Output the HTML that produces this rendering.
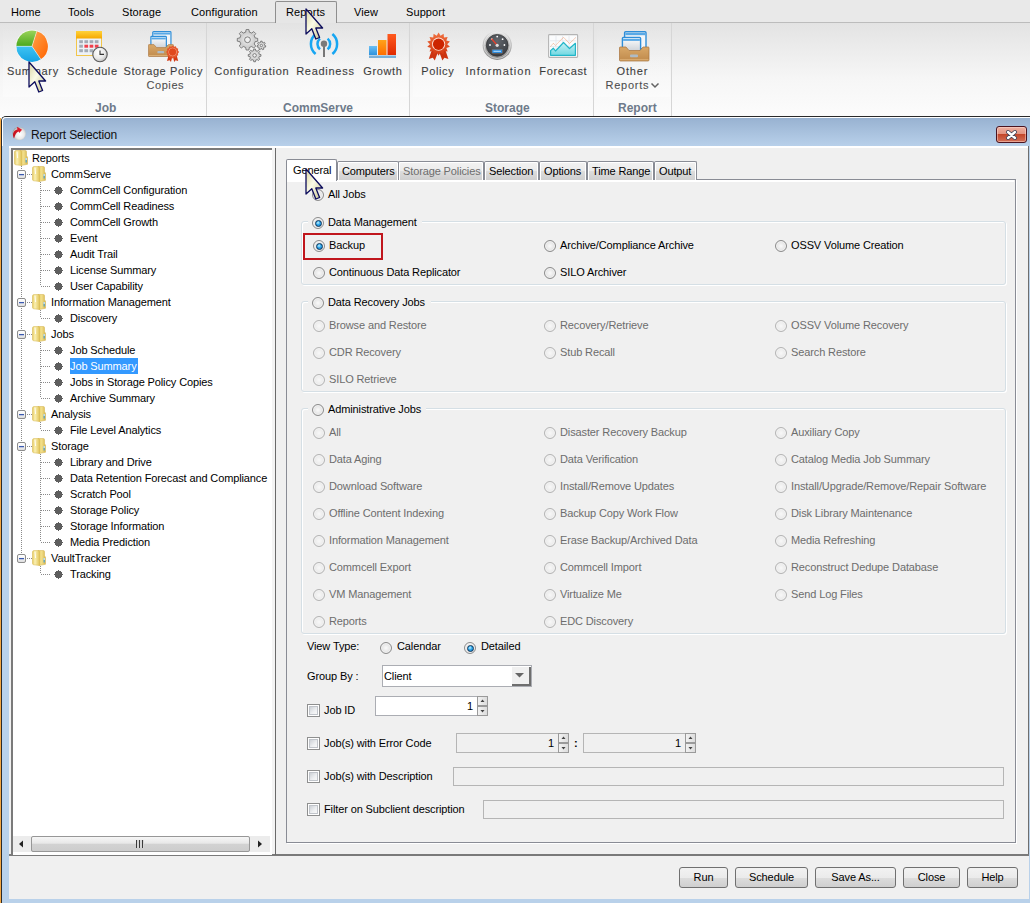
<!DOCTYPE html><html><head><meta charset="utf-8"><style>
*{margin:0;padding:0;box-sizing:border-box}
html,body{width:1030px;height:903px;overflow:hidden;background:#fff}
body{position:relative;font-family:"Liberation Sans",sans-serif;font-size:11px;color:#000}
.a{position:absolute}
.t{position:absolute;white-space:nowrap;line-height:13px;letter-spacing:-0.15px}
#menubar{left:0;top:0;width:1030px;height:23px;background:#e9e9e9;border-bottom:1px solid #bcbcbc}
.mi{position:absolute;top:6px;font-size:11px;line-height:13px;color:#000;letter-spacing:0.1px}
#reptab{left:275px;top:1px;width:62px;height:23px;border:1px solid #8e8e8e;border-bottom:none;border-radius:2px 2px 0 0;background:#e6e6e6}
#ribbon{left:0;top:23px;width:1030px;height:93px;background:linear-gradient(#e3e3e3,#f6f6f6 60%,#fcfcfc)}
.rsep{position:absolute;top:23px;width:1px;height:93px;background:#d6d6d6}
.rl{position:absolute;font-size:11px;line-height:14px;letter-spacing:0.55px;color:#000;-webkit-text-stroke:0.12px #000;text-align:center;white-space:nowrap}
.gl{position:absolute;top:101px;font-size:12px;line-height:14px;font-weight:bold;color:#6e7a8a;white-space:nowrap}
#dlgtitle{left:2px;top:117px;width:1028px;height:29px;background:linear-gradient(#98b2d1,#b8d0ea);border-left:1px solid #fff;border-top:1px solid #fff;border-radius:4px 0 0 0}
#dlg{left:1px;top:116px;width:1029px;height:787px;background:#b9d1ea;border-top:1px solid #2a2a2a;border-left:1px solid #2a2a2a;border-top-left-radius:5px}
#body{left:9px;top:146px;width:1020px;height:753px;background:#f0f0f0;border-top:2px solid #fff}
.tt{position:absolute;font-size:12px;line-height:14px;letter-spacing:-0.17px;color:#111;white-space:nowrap}
#tree{left:11px;top:148px;width:261px;height:707px;background:#fff;border-left:2px solid #7a7a7a;border-top:2px solid #7a7a7a}
.tn{position:absolute;white-space:nowrap;line-height:13px;letter-spacing:-0.12px;color:#000}
.bul{position:absolute;width:9px;height:9px;border-radius:50%;background:#595959}
.eb{position:absolute;width:9px;height:9px;border:1px solid #8c8c8c;border-radius:2px;background:linear-gradient(#fff,#f2f2f2 50%,#dedede)}
.eb:after{content:"";box-sizing:border-box;position:absolute;left:1px;top:3px;width:5px;height:1px;background:#3b5ab0;box-shadow:0 0.5px 0 #8fa0d0}
.vd{position:absolute;width:1px;background-image:linear-gradient(#8a8a8a 50%,transparent 50%);background-size:1px 2px}
.hd{position:absolute;height:1px;background-image:linear-gradient(90deg,#8a8a8a 50%,transparent 50%);background-size:2px 1px}
</style></head><body>
<div class="a" id="menubar"></div><div class="a" id="reptab"></div>
<div class="mi" style="left:11px">Home</div>
<div class="mi" style="left:68px">Tools</div>
<div class="mi" style="left:122px">Storage</div>
<div class="mi" style="left:191px">Configuration</div>
<div class="mi" style="left:286px">Reports</div>
<div class="mi" style="left:354px">View</div>
<div class="mi" style="left:406px">Support</div>
<div class="a" id="ribbon"></div>
<div class="rsep" style="left:206px"></div>
<div class="rsep" style="left:409px"></div>
<div class="rsep" style="left:593px"></div>
<div class="rsep" style="left:671px"></div>
<div class="gl" style="left:95px">Job</div>
<div class="gl" style="left:283px">CommServe</div>
<div class="gl" style="left:485px">Storage</div>
<div class="gl" style="left:618px">Report</div>
<div class="a" id="dlg"></div>
<div class="a" style="left:0;top:118px;width:1px;height:785px;background:#f5a742"></div>
<div class="a" id="dlgtitle"></div>
<svg class="a" style="left:11px;top:125px" width="17" height="17" viewBox="11 125 17 17"><defs><radialGradient id="sph" cx="0.55" cy="0.55" r="0.6"><stop offset="0" stop-color="#ffffff"/><stop offset="0.55" stop-color="#ebebeb"/><stop offset="0.85" stop-color="#bdbdbd"/><stop offset="1" stop-color="#7c7c7c"/></radialGradient><linearGradient id="arr" x1="0" y1="0" x2="1" y2="0"><stop offset="0" stop-color="#c0101e"/><stop offset="1" stop-color="#ea2030"/></linearGradient></defs><circle cx="19.2" cy="133.6" r="6.7" fill="url(#sph)"/><path d="M14 138.6 C12 134.5 13 130.5 17.4 129.5 L17.1 126.7 L22.1 129.8 L19.2 133.1 L18.8 131.6 C16.4 132.3 15.2 134.8 14 138.6 Z" fill="url(#arr)"/></svg>
<div class="tt" style="left:31px;top:128px">Report Selection</div>
<div class="a" style="left:996px;top:126px;width:31px;height:17px;border:1px solid #4a1420;border-radius:3px;background:linear-gradient(#eeb0a0,#e39482 45%,#c4472b 50%,#d27058);box-shadow:inset 0 0 0 1px rgba(255,220,210,0.5)"></div>
<svg class="a" style="left:1004px;top:128px" width="16" height="14" viewBox="0 0 16 14"><path d="M4 4 L11 10 M11 4 L4 10" stroke="#3a3f55" stroke-width="4" stroke-linecap="round"/><path d="M4 4 L11 10 M11 4 L4 10" stroke="#fff" stroke-width="2.4" stroke-linecap="round"/></svg>
<div class="a" id="body"></div>
<div class="a" style="left:1028px;top:146px;width:1px;height:710px;background:#6e6e6e"></div>
<div class="a" style="left:9px;top:854px;width:1020px;height:2px;background:#7a7a7a"></div>
<div class="a" id="tree"></div>
<div class="a" style="left:272px;top:148px;width:3px;height:706px;background:#f4f4f4"></div>
<div class="a" style="left:275px;top:148px;width:1px;height:707px;background:#6a6a6a"></div>
<div class="rl" style="left:-27.1px;top:64px;width:120px;letter-spacing:0.70px">Summary</div>
<div class="rl" style="left:32.3px;top:64px;width:120px;letter-spacing:0.60px">Schedule</div>
<div class="rl" style="left:103.3px;top:64px;width:120px;letter-spacing:0.62px">Storage Policy</div>
<div class="rl" style="left:105.3px;top:78px;width:120px;letter-spacing:0.60px">Copies</div>
<div class="rl" style="left:191.9px;top:64px;width:120px;letter-spacing:0.75px">Configuration</div>
<div class="rl" style="left:265.4px;top:64px;width:120px;letter-spacing:0.72px">Readiness</div>
<div class="rl" style="left:322.8px;top:64px;width:120px;letter-spacing:0.62px">Growth</div>
<div class="rl" style="left:377.8px;top:64px;width:120px;letter-spacing:0.65px">Policy</div>
<div class="rl" style="left:438.5px;top:64px;width:120px;letter-spacing:1.00px">Information</div>
<div class="rl" style="left:503.3px;top:64px;width:120px;letter-spacing:0.65px">Forecast</div>
<div class="rl" style="left:572.4px;top:64px;width:120px;letter-spacing:0.85px">Other</div>
<div class="rl" style="left:567.4px;top:78px;width:120px;letter-spacing:0.75px">Reports</div>
<svg class="a" style="left:650px;top:82px" width="10" height="7"><path d="M1.5 1.5 L5 5 L8.5 1.5" stroke="#222" stroke-width="1.5" fill="none"/></svg>
<div class="a" style="left:3px;top:25px;width:202px;height:72px;background:linear-gradient(rgba(255,255,255,0),rgba(255,255,255,0.35))"></div>
<div class="a" style="left:210px;top:25px;width:198px;height:72px;background:linear-gradient(rgba(255,255,255,0),rgba(255,255,255,0.35))"></div>
<div class="a" style="left:413px;top:25px;width:179px;height:72px;background:linear-gradient(rgba(255,255,255,0),rgba(255,255,255,0.35))"></div>
<div class="a" style="left:597px;top:25px;width:73px;height:72px;background:linear-gradient(rgba(255,255,255,0),rgba(255,255,255,0.35))"></div>
<svg class="a" style="left:15px;top:29px" width="34" height="34" viewBox="15 29 34 34">
<defs><linearGradient id="pg" x1="0" y1="0" x2="0" y2="1"><stop offset="0" stop-color="#9bd35a"/><stop offset="1" stop-color="#4aa81c"/></linearGradient>
<linearGradient id="po" x1="0" y1="0" x2="1" y2="1"><stop offset="0" stop-color="#ffa24a"/><stop offset="1" stop-color="#ff6400"/></linearGradient>
<linearGradient id="pb" x1="0" y1="0" x2="0" y2="1"><stop offset="0" stop-color="#3ec3f2"/><stop offset="1" stop-color="#16a3e3"/></linearGradient></defs>
<circle cx="32" cy="46" r="16.3" fill="#fff" opacity="0.8"/>
<path d="M32 46.3 L16.4 46.3 A15.6 15.6 0 0 1 36.8 31.2 Z" fill="url(#pg)"/>
<path d="M32 46.3 L36.8 31.2 A15.6 15.6 0 0 1 40.8 59.2 Z" fill="url(#po)"/>
<path d="M32 46.3 L40.8 59.2 A15.6 15.6 0 0 1 16.4 46.3 Z" fill="url(#pb)"/>
<path d="M32 46.3 L16.4 46.3 M32 46.3 L36.8 31.2 M32 46.3 L40.8 59.2" stroke="#fff" stroke-width="0.7" opacity="0.7"/>
</svg>
<svg class="a" style="left:74px;top:29px" width="36" height="36" viewBox="74 29 36 36"><defs><linearGradient id="cy" x1="0" y1="0" x2="0" y2="1"><stop offset="0" stop-color="#ffd23a"/><stop offset="1" stop-color="#f6a800"/></linearGradient><radialGradient id="ck" cx="0.4" cy="0.35" r="0.7"><stop offset="0" stop-color="#fff"/><stop offset="0.6" stop-color="#e9e9e9"/><stop offset="1" stop-color="#b8b8b8"/></radialGradient></defs><rect x="76.5" y="31.5" width="25" height="24" fill="#eef2f7" stroke="#f2c64a"/><rect x="76" y="31" width="26" height="7.5" fill="url(#cy)"/><rect x="79.2" y="40.2" width="3.7" height="3" fill="#a3abb5"/><rect x="84.4" y="40.2" width="3.7" height="3" fill="#a3abb5"/><rect x="89.6" y="40.2" width="3.7" height="3" fill="#a3abb5"/><rect x="94.8" y="40.2" width="3.7" height="3" fill="#a3abb5"/><rect x="79.2" y="44.7" width="3.7" height="3" fill="#a3abb5"/><rect x="84.4" y="44.7" width="3.7" height="3" fill="#f0404c"/><rect x="89.6" y="44.7" width="3.7" height="3" fill="#f0404c"/><rect x="94.8" y="44.7" width="3.7" height="3" fill="#f0404c"/><rect x="79.2" y="49.2" width="3.7" height="3" fill="#a3abb5"/><rect x="84.4" y="49.2" width="3.7" height="3" fill="#a3abb5"/><rect x="89.6" y="49.2" width="3.7" height="3" fill="#a3abb5"/><rect x="94.8" y="49.2" width="3.7" height="3" fill="#a3abb5"/><circle cx="100" cy="54.5" r="7.2" fill="url(#ck)" stroke="#5a5a5a" stroke-width="1.1"/><path d="M100 50.4 L100 54.4 L104 54.4" stroke="#333" stroke-width="1.1" fill="none"/></svg>
<svg class="a" style="left:148px;top:31px" width="36" height="34" viewBox="0 0 36 34"><defs><linearGradient id="tr148" x1="0" y1="0" x2="0" y2="1"><stop offset="0" stop-color="#d9a868"/><stop offset="1" stop-color="#c08a4c"/></linearGradient><linearGradient id="wn148" x1="0" y1="0" x2="0" y2="1"><stop offset="0" stop-color="#ffffff"/><stop offset="1" stop-color="#c9ced4"/></linearGradient></defs><g transform="scale(0.850)"><rect x="5.6" y="0.7" width="21.4" height="17" rx="1" fill="#f4f6f8" stroke="#2f8ed8" stroke-width="1.4"/><rect x="6.3" y="2" width="20" height="2.2" fill="#59a9e6"/><rect x="3.4" y="6.4" width="18.2" height="15" rx="1" fill="url(#wn148)" stroke="#2f8ed8" stroke-width="1.4"/><rect x="4.1" y="7.7" width="16.8" height="2.2" fill="#59a9e6"/><path d="M1 16 L7 16 L10 19.5 L21 19.5 L24 16 L29.5 16 Q30 16 30 17 L30 29 Q30 30 29 30 L1.5 30 Q0.5 30 0.5 29 L0.5 17 Q0.5 16 1 16Z" fill="url(#tr148)" stroke="#a8733e" stroke-width="0.7"/><rect x="11" y="23.6" width="8" height="2.6" rx="1" fill="#aebbc6"/><path d="M1 28.8 L29.5 28.8" stroke="#e8c088" stroke-width="0.8"/></g><path d="M20.5 24.5 L19 30 L21.6 29.2 L23 31 L24.2 26Z M28.7 24.5 L30.2 30 L27.6 29.2 L26.2 31 L25 26Z" fill="#d43a14"/><polygon points="24.60,14.50 26.02,15.69 27.85,15.37 28.49,17.11 30.23,17.75 29.91,19.58 31.10,21.00 29.91,22.42 30.23,24.25 28.49,24.89 27.85,26.63 26.02,26.31 24.60,27.50 23.18,26.31 21.35,26.63 20.71,24.89 18.97,24.25 19.29,22.42 18.10,21.00 19.29,19.58 18.97,17.75 20.71,17.11 21.35,15.37 23.18,15.69" fill="#e4562a"/><circle cx="24.6" cy="21.0" r="3.9" fill="none" stroke="#f6a88a" stroke-width="0.7"/><circle cx="24.6" cy="21.0" r="3.4" fill="#e0481c"/></svg>
<svg class="a" style="left:234px;top:28px" width="36" height="36" viewBox="234 28 36 36"><defs><radialGradient id="gr" cx="0.5" cy="0.5" r="0.6"><stop offset="0" stop-color="#f4f4f4"/><stop offset="0.6" stop-color="#cdcdcd"/><stop offset="1" stop-color="#e8e8e8"/></radialGradient></defs><polygon points="245.66,32.12 246.13,29.59 248.87,29.59 249.34,32.12 251.63,33.06 253.75,31.61 255.69,33.55 254.24,35.67 255.18,37.96 257.71,38.43 257.71,41.17 255.18,41.64 254.24,43.93 255.69,46.05 253.75,47.99 251.63,46.54 249.34,47.48 248.87,50.01 246.13,50.01 245.66,47.48 243.37,46.54 241.25,47.99 239.31,46.05 240.76,43.93 239.82,41.64 237.29,41.17 237.29,38.43 239.82,37.96 240.76,35.67 239.31,33.55 241.25,31.61 243.37,33.06" fill="url(#gr)" stroke="#5e5e5e" stroke-width="0.75" stroke-linejoin="round"/><circle cx="247.5" cy="39.8" r="2.9" fill="#f0f0f0" stroke="#5e5e5e" stroke-width="0.75"/><polygon points="260.52,42.32 260.73,41.15 262.07,41.15 262.28,42.32 263.34,42.83 264.38,42.27 265.22,43.31 264.43,44.20 264.70,45.35 265.79,45.82 265.49,47.12 264.31,47.06 263.57,47.99 263.89,49.13 262.68,49.71 261.99,48.75 260.81,48.75 260.12,49.71 258.91,49.13 259.23,47.99 258.49,47.06 257.31,47.12 257.01,45.82 258.10,45.35 258.37,44.20 257.58,43.31 258.42,42.27 259.46,42.83" fill="url(#gr)" stroke="#5e5e5e" stroke-width="0.75" stroke-linejoin="round"/><circle cx="261.4" cy="45.5" r="1.2" fill="#f0f0f0" stroke="#5e5e5e" stroke-width="0.75"/><polygon points="253.46,50.64 253.75,49.06 255.45,49.06 255.74,50.64 257.16,51.22 258.48,50.31 259.69,51.52 258.78,52.84 259.36,54.26 260.94,54.55 260.94,56.25 259.36,56.54 258.78,57.96 259.69,59.28 258.48,60.49 257.16,59.58 255.74,60.16 255.45,61.74 253.75,61.74 253.46,60.16 252.04,59.58 250.72,60.49 249.51,59.28 250.42,57.96 249.84,56.54 248.26,56.25 248.26,54.55 249.84,54.26 250.42,52.84 249.51,51.52 250.72,50.31 252.04,51.22" fill="url(#gr)" stroke="#5e5e5e" stroke-width="0.75" stroke-linejoin="round"/><circle cx="254.6" cy="55.4" r="1.8" fill="#f0f0f0" stroke="#5e5e5e" stroke-width="0.75"/></svg>
<svg class="a" style="left:306px;top:30px" width="36" height="30" viewBox="306 30 36 30"><g fill="none" stroke="#17a6f2" stroke-width="2.5" stroke-linecap="butt"><path d="M320 38.6 A7 7 0 0 0 320 49.4"/><path d="M327.6 38.6 A7 7 0 0 1 327.6 49.4"/><path d="M315.6 34 A13 13 0 0 0 315.6 54"/><path d="M332.4 34 A13 13 0 0 1 332.4 54"/></g><rect x="323" y="44" width="2" height="13" fill="#777"/><circle cx="324" cy="43.7" r="3.2" fill="#7a7a7a"/></svg>
<svg class="a" style="left:366px;top:31px" width="32" height="30" viewBox="366 31 32 30"><defs><linearGradient id="b1" x1="0" y1="0" x2="0" y2="1"><stop offset="0" stop-color="#6cc0f4"/><stop offset="1" stop-color="#2f93dc"/></linearGradient><linearGradient id="b2" x1="0" y1="0" x2="0" y2="1"><stop offset="0" stop-color="#ffa21a"/><stop offset="1" stop-color="#ff6e00"/></linearGradient><linearGradient id="b3" x1="0" y1="0" x2="0" y2="1"><stop offset="0" stop-color="#ff5a1e"/><stop offset="1" stop-color="#e02a00"/></linearGradient></defs><rect x="369" y="46" width="8" height="9" fill="url(#b1)"/><rect x="378" y="40" width="8.5" height="15" fill="url(#b2)"/><rect x="387.5" y="34" width="8.5" height="21" fill="url(#b3)"/><rect x="369" y="55.5" width="27" height="2.5" fill="#7ab0d8"/></svg>
<svg class="a" style="left:424px;top:30px" width="30" height="32" viewBox="424 30 30 32"><defs><linearGradient id="pbg" x1="0" y1="0" x2="0" y2="1"><stop offset="0" stop-color="#f07040"/><stop offset="1" stop-color="#d23810"/></linearGradient></defs><path d="M432.5 48 L428.8 59 L432.8 57.8 L434.8 60.5 L438 52Z M444.7 48 L448.4 59 L444.4 57.8 L442.4 60.5 L439.2 52Z" fill="#cc3410"/><polygon points="438.60,32.60 440.51,35.82 443.63,33.75 443.96,37.48 447.67,36.97 446.35,40.47 449.91,41.62 447.20,44.20 449.91,46.78 446.35,47.93 447.67,51.43 443.96,50.92 443.63,54.65 440.51,52.58 438.60,55.80 436.69,52.58 433.57,54.65 433.24,50.92 429.53,51.43 430.85,47.93 427.29,46.78 430.00,44.20 427.29,41.62 430.85,40.47 429.53,36.97 433.24,37.48 433.57,33.75 436.69,35.82" fill="url(#pbg)"/><circle cx="438.6" cy="44.2" r="6.6" fill="#fbe0d4"/><circle cx="438.6" cy="44.2" r="5.7" fill="#cc2500"/></svg>
<svg class="a" style="left:480px;top:28px" width="34" height="34" viewBox="480 28 34 34"><defs><linearGradient id="gm" x1="0" y1="0" x2="0" y2="1"><stop offset="0" stop-color="#e8e8e8"/><stop offset="1" stop-color="#8a8a8a"/></linearGradient><radialGradient id="gf" cx="0.5" cy="0.3" r="0.7"><stop offset="0" stop-color="#62666c"/><stop offset="1" stop-color="#3a3d42"/></radialGradient></defs><circle cx="497.2" cy="45.3" r="14.6" fill="url(#gm)"/><circle cx="497.2" cy="45.3" r="13.2" fill="none" stroke="#f4f4f4" stroke-width="0.8" opacity="0.7"/><circle cx="497.2" cy="45.3" r="10.9" fill="url(#gf)" stroke="#333" stroke-width="0.7"/><g fill="#fff"><circle cx="490" cy="45" r="0.9"/><circle cx="491.8" cy="39.2" r="0.9"/><circle cx="497.2" cy="36.6" r="0.9"/><circle cx="502.6" cy="39.2" r="0.9"/><circle cx="504.4" cy="45" r="0.9"/></g><path d="M497.2 45.3 L491.5 38.8" stroke="#e8412c" stroke-width="1.3"/><circle cx="497.2" cy="45.3" r="1.6" fill="#ddd"/><rect x="492" y="49.2" width="10.5" height="4" fill="#2a8de0" stroke="#8a6040" stroke-width="0.5"/><rect x="493.5" y="50.8" width="7.5" height="0.9" fill="#cfe8ff"/></svg>
<svg class="a" style="left:546px;top:32px" width="34" height="28" viewBox="546 32 34 28"><defs><linearGradient id="fc" x1="0" y1="0" x2="0" y2="1"><stop offset="0" stop-color="#c8f0f4"/><stop offset="1" stop-color="#72d8e2"/></linearGradient></defs><rect x="548.6" y="34.6" width="29" height="22.8" rx="0.8" fill="#fbfcfd" stroke="#b4b4b4" stroke-width="1.1"/><g stroke="#e4e9ee" stroke-width="0.9"><path d="M550 40.8H576M550 46.5H576M556 35.5V56M562.5 35.5V56M569 35.5V56"/></g><path d="M550.5 46.5 L553.4 43.3 L555.5 45.5 L563.5 37.3 L569.5 43.5 L576 37.3" stroke="#f2a47c" stroke-width="0.9" fill="none" stroke-dasharray="1 0.5"/><path d="M550.6 55.3 L550.6 50.6 L553.3 48.2 L555.5 51 L563.5 42.5 L569.5 48.5 L575.4 43.3 L575.4 55.3Z" fill="url(#fc)" stroke="#22b6c8" stroke-width="1.2" stroke-linejoin="round"/></svg>
<svg class="a" style="left:619px;top:31px" width="36" height="34" viewBox="0 0 36 34"><defs><linearGradient id="tr619" x1="0" y1="0" x2="0" y2="1"><stop offset="0" stop-color="#d9a868"/><stop offset="1" stop-color="#c08a4c"/></linearGradient><linearGradient id="wn619" x1="0" y1="0" x2="0" y2="1"><stop offset="0" stop-color="#ffffff"/><stop offset="1" stop-color="#c9ced4"/></linearGradient></defs><g transform="scale(1.000)"><rect x="5.6" y="0.7" width="21.4" height="17" rx="1" fill="#f4f6f8" stroke="#2f8ed8" stroke-width="1.4"/><rect x="6.3" y="2" width="20" height="2.2" fill="#59a9e6"/><rect x="3.4" y="6.4" width="18.2" height="15" rx="1" fill="url(#wn619)" stroke="#2f8ed8" stroke-width="1.4"/><rect x="4.1" y="7.7" width="16.8" height="2.2" fill="#59a9e6"/><path d="M1 16 L7 16 L10 19.5 L21 19.5 L24 16 L29.5 16 Q30 16 30 17 L30 29 Q30 30 29 30 L1.5 30 Q0.5 30 0.5 29 L0.5 17 Q0.5 16 1 16Z" fill="url(#tr619)" stroke="#a8733e" stroke-width="0.7"/><rect x="11" y="23.6" width="8" height="2.6" rx="1" fill="#aebbc6"/><path d="M1 28.8 L29.5 28.8" stroke="#e8c088" stroke-width="0.8"/></g></svg>
<div class="vd" style="left:21px;top:166px;height:388px"></div>
<div class="vd" style="left:40px;top:182px;height:104px"></div>
<div class="vd" style="left:40px;top:310px;height:8px"></div>
<div class="vd" style="left:40px;top:342px;height:56px"></div>
<div class="vd" style="left:40px;top:422px;height:8px"></div>
<div class="vd" style="left:40px;top:454px;height:88px"></div>
<div class="vd" style="left:40px;top:566px;height:8px"></div>
<svg class="a" style="left:14px;top:150px" width="14" height="16" viewBox="0 0 14 16"><defs><linearGradient id="fb1" x1="0" x2="1" y1="0" y2="0"><stop offset="0" stop-color="#e8cf6a"/><stop offset="0.5" stop-color="#f1de8a"/><stop offset="1" stop-color="#d6b54a"/></linearGradient><linearGradient id="ff1" x1="0" x2="1" y1="0" y2="0"><stop offset="0" stop-color="#e4c95c"/><stop offset="0.35" stop-color="#faf0b4"/><stop offset="1" stop-color="#e2c55a"/></linearGradient></defs><path d="M6 0.5 L11.3 0.5 Q12.5 0.5 12.5 1.8 L12.5 6 L13.5 7 L13.5 14.3 L7 15.5Z" fill="url(#fb1)" stroke="#d2b04a" stroke-width="0.5"/><path d="M0.5 2 Q0.5 0.5 2 0.5 L6.2 0.5 Q7.5 0.5 7.5 2 L7.5 15.5 L1.8 14.8 Q0.5 14.6 0.5 13.5Z" fill="url(#ff1)" stroke="#d6b64e" stroke-width="0.5"/><path d="M3 1.8 L3.6 8" stroke="#fff" stroke-width="1" opacity="0.85"/><rect x="11.6" y="8" width="1.1" height="4.5" fill="#3a9de0"/><rect x="11.6" y="8" width="1.1" height="2" fill="#e8f4fb"/></svg>
<div class="tn" style="left:32px;top:152px">Reports</div>
<div class="hd" style="left:27px;top:174px;width:5px"></div>
<div class="eb" style="left:17px;top:170px"></div>
<svg class="a" style="left:32px;top:166px" width="14" height="16" viewBox="0 0 14 16"><defs><linearGradient id="fb2" x1="0" x2="1" y1="0" y2="0"><stop offset="0" stop-color="#e8cf6a"/><stop offset="0.5" stop-color="#f1de8a"/><stop offset="1" stop-color="#d6b54a"/></linearGradient><linearGradient id="ff2" x1="0" x2="1" y1="0" y2="0"><stop offset="0" stop-color="#e4c95c"/><stop offset="0.35" stop-color="#faf0b4"/><stop offset="1" stop-color="#e2c55a"/></linearGradient></defs><path d="M6 0.5 L11.3 0.5 Q12.5 0.5 12.5 1.8 L12.5 6 L13.5 7 L13.5 14.3 L7 15.5Z" fill="url(#fb2)" stroke="#d2b04a" stroke-width="0.5"/><path d="M0.5 2 Q0.5 0.5 2 0.5 L6.2 0.5 Q7.5 0.5 7.5 2 L7.5 15.5 L1.8 14.8 Q0.5 14.6 0.5 13.5Z" fill="url(#ff2)" stroke="#d6b64e" stroke-width="0.5"/><path d="M3 1.8 L3.6 8" stroke="#fff" stroke-width="1" opacity="0.85"/><rect x="11.6" y="8" width="1.1" height="4.5" fill="#3a9de0"/><rect x="11.6" y="8" width="1.1" height="2" fill="#e8f4fb"/></svg>
<div class="tn" style="left:51px;top:168px">CommServe</div>
<div class="hd" style="left:41px;top:190px;width:10px"></div>
<svg class="a" style="left:54px;top:186px" width="9" height="9" shape-rendering="crispEdges"><path d="M2 1H7V2H8V7H7V8H2V7H1V2H2ZM4 0H5V1H4ZM4 8H5V9H4ZM0 4H1V5H0ZM8 4H9V5H8Z" fill="#5e5e5e"/></svg>
<div class="tn" style="left:70px;top:184px">CommCell Configuration</div>
<div class="hd" style="left:41px;top:206px;width:10px"></div>
<svg class="a" style="left:54px;top:202px" width="9" height="9" shape-rendering="crispEdges"><path d="M2 1H7V2H8V7H7V8H2V7H1V2H2ZM4 0H5V1H4ZM4 8H5V9H4ZM0 4H1V5H0ZM8 4H9V5H8Z" fill="#5e5e5e"/></svg>
<div class="tn" style="left:70px;top:200px">CommCell Readiness</div>
<div class="hd" style="left:41px;top:222px;width:10px"></div>
<svg class="a" style="left:54px;top:218px" width="9" height="9" shape-rendering="crispEdges"><path d="M2 1H7V2H8V7H7V8H2V7H1V2H2ZM4 0H5V1H4ZM4 8H5V9H4ZM0 4H1V5H0ZM8 4H9V5H8Z" fill="#5e5e5e"/></svg>
<div class="tn" style="left:70px;top:216px">CommCell Growth</div>
<div class="hd" style="left:41px;top:238px;width:10px"></div>
<svg class="a" style="left:54px;top:234px" width="9" height="9" shape-rendering="crispEdges"><path d="M2 1H7V2H8V7H7V8H2V7H1V2H2ZM4 0H5V1H4ZM4 8H5V9H4ZM0 4H1V5H0ZM8 4H9V5H8Z" fill="#5e5e5e"/></svg>
<div class="tn" style="left:70px;top:232px">Event</div>
<div class="hd" style="left:41px;top:254px;width:10px"></div>
<svg class="a" style="left:54px;top:250px" width="9" height="9" shape-rendering="crispEdges"><path d="M2 1H7V2H8V7H7V8H2V7H1V2H2ZM4 0H5V1H4ZM4 8H5V9H4ZM0 4H1V5H0ZM8 4H9V5H8Z" fill="#5e5e5e"/></svg>
<div class="tn" style="left:70px;top:248px">Audit Trail</div>
<div class="hd" style="left:41px;top:270px;width:10px"></div>
<svg class="a" style="left:54px;top:266px" width="9" height="9" shape-rendering="crispEdges"><path d="M2 1H7V2H8V7H7V8H2V7H1V2H2ZM4 0H5V1H4ZM4 8H5V9H4ZM0 4H1V5H0ZM8 4H9V5H8Z" fill="#5e5e5e"/></svg>
<div class="tn" style="left:70px;top:264px">License Summary</div>
<div class="hd" style="left:41px;top:286px;width:10px"></div>
<svg class="a" style="left:54px;top:282px" width="9" height="9" shape-rendering="crispEdges"><path d="M2 1H7V2H8V7H7V8H2V7H1V2H2ZM4 0H5V1H4ZM4 8H5V9H4ZM0 4H1V5H0ZM8 4H9V5H8Z" fill="#5e5e5e"/></svg>
<div class="tn" style="left:70px;top:280px">User Capability</div>
<div class="hd" style="left:27px;top:302px;width:5px"></div>
<div class="eb" style="left:17px;top:298px"></div>
<svg class="a" style="left:32px;top:294px" width="14" height="16" viewBox="0 0 14 16"><defs><linearGradient id="fb3" x1="0" x2="1" y1="0" y2="0"><stop offset="0" stop-color="#e8cf6a"/><stop offset="0.5" stop-color="#f1de8a"/><stop offset="1" stop-color="#d6b54a"/></linearGradient><linearGradient id="ff3" x1="0" x2="1" y1="0" y2="0"><stop offset="0" stop-color="#e4c95c"/><stop offset="0.35" stop-color="#faf0b4"/><stop offset="1" stop-color="#e2c55a"/></linearGradient></defs><path d="M6 0.5 L11.3 0.5 Q12.5 0.5 12.5 1.8 L12.5 6 L13.5 7 L13.5 14.3 L7 15.5Z" fill="url(#fb3)" stroke="#d2b04a" stroke-width="0.5"/><path d="M0.5 2 Q0.5 0.5 2 0.5 L6.2 0.5 Q7.5 0.5 7.5 2 L7.5 15.5 L1.8 14.8 Q0.5 14.6 0.5 13.5Z" fill="url(#ff3)" stroke="#d6b64e" stroke-width="0.5"/><path d="M3 1.8 L3.6 8" stroke="#fff" stroke-width="1" opacity="0.85"/><rect x="11.6" y="8" width="1.1" height="4.5" fill="#3a9de0"/><rect x="11.6" y="8" width="1.1" height="2" fill="#e8f4fb"/></svg>
<div class="tn" style="left:51px;top:296px">Information Management</div>
<div class="hd" style="left:41px;top:318px;width:10px"></div>
<svg class="a" style="left:54px;top:314px" width="9" height="9" shape-rendering="crispEdges"><path d="M2 1H7V2H8V7H7V8H2V7H1V2H2ZM4 0H5V1H4ZM4 8H5V9H4ZM0 4H1V5H0ZM8 4H9V5H8Z" fill="#5e5e5e"/></svg>
<div class="tn" style="left:70px;top:312px">Discovery</div>
<div class="hd" style="left:27px;top:334px;width:5px"></div>
<div class="eb" style="left:17px;top:330px"></div>
<svg class="a" style="left:32px;top:326px" width="14" height="16" viewBox="0 0 14 16"><defs><linearGradient id="fb4" x1="0" x2="1" y1="0" y2="0"><stop offset="0" stop-color="#e8cf6a"/><stop offset="0.5" stop-color="#f1de8a"/><stop offset="1" stop-color="#d6b54a"/></linearGradient><linearGradient id="ff4" x1="0" x2="1" y1="0" y2="0"><stop offset="0" stop-color="#e4c95c"/><stop offset="0.35" stop-color="#faf0b4"/><stop offset="1" stop-color="#e2c55a"/></linearGradient></defs><path d="M6 0.5 L11.3 0.5 Q12.5 0.5 12.5 1.8 L12.5 6 L13.5 7 L13.5 14.3 L7 15.5Z" fill="url(#fb4)" stroke="#d2b04a" stroke-width="0.5"/><path d="M0.5 2 Q0.5 0.5 2 0.5 L6.2 0.5 Q7.5 0.5 7.5 2 L7.5 15.5 L1.8 14.8 Q0.5 14.6 0.5 13.5Z" fill="url(#ff4)" stroke="#d6b64e" stroke-width="0.5"/><path d="M3 1.8 L3.6 8" stroke="#fff" stroke-width="1" opacity="0.85"/><rect x="11.6" y="8" width="1.1" height="4.5" fill="#3a9de0"/><rect x="11.6" y="8" width="1.1" height="2" fill="#e8f4fb"/></svg>
<div class="tn" style="left:51px;top:328px">Jobs</div>
<div class="hd" style="left:41px;top:350px;width:10px"></div>
<svg class="a" style="left:54px;top:346px" width="9" height="9" shape-rendering="crispEdges"><path d="M2 1H7V2H8V7H7V8H2V7H1V2H2ZM4 0H5V1H4ZM4 8H5V9H4ZM0 4H1V5H0ZM8 4H9V5H8Z" fill="#5e5e5e"/></svg>
<div class="tn" style="left:70px;top:344px">Job Schedule</div>
<div class="hd" style="left:41px;top:366px;width:10px"></div>
<svg class="a" style="left:54px;top:362px" width="9" height="9" shape-rendering="crispEdges"><path d="M2 1H7V2H8V7H7V8H2V7H1V2H2ZM4 0H5V1H4ZM4 8H5V9H4ZM0 4H1V5H0ZM8 4H9V5H8Z" fill="#5e5e5e"/></svg>
<div class="a" style="left:70px;top:358px;width:68px;height:16px;background:#3399ff"></div>
<div class="tn" style="left:70px;top:360px;color:#fff">Job Summary</div>
<div class="hd" style="left:41px;top:382px;width:10px"></div>
<svg class="a" style="left:54px;top:378px" width="9" height="9" shape-rendering="crispEdges"><path d="M2 1H7V2H8V7H7V8H2V7H1V2H2ZM4 0H5V1H4ZM4 8H5V9H4ZM0 4H1V5H0ZM8 4H9V5H8Z" fill="#5e5e5e"/></svg>
<div class="tn" style="left:70px;top:376px">Jobs in Storage Policy Copies</div>
<div class="hd" style="left:41px;top:398px;width:10px"></div>
<svg class="a" style="left:54px;top:394px" width="9" height="9" shape-rendering="crispEdges"><path d="M2 1H7V2H8V7H7V8H2V7H1V2H2ZM4 0H5V1H4ZM4 8H5V9H4ZM0 4H1V5H0ZM8 4H9V5H8Z" fill="#5e5e5e"/></svg>
<div class="tn" style="left:70px;top:392px">Archive Summary</div>
<div class="hd" style="left:27px;top:414px;width:5px"></div>
<div class="eb" style="left:17px;top:410px"></div>
<svg class="a" style="left:32px;top:406px" width="14" height="16" viewBox="0 0 14 16"><defs><linearGradient id="fb5" x1="0" x2="1" y1="0" y2="0"><stop offset="0" stop-color="#e8cf6a"/><stop offset="0.5" stop-color="#f1de8a"/><stop offset="1" stop-color="#d6b54a"/></linearGradient><linearGradient id="ff5" x1="0" x2="1" y1="0" y2="0"><stop offset="0" stop-color="#e4c95c"/><stop offset="0.35" stop-color="#faf0b4"/><stop offset="1" stop-color="#e2c55a"/></linearGradient></defs><path d="M6 0.5 L11.3 0.5 Q12.5 0.5 12.5 1.8 L12.5 6 L13.5 7 L13.5 14.3 L7 15.5Z" fill="url(#fb5)" stroke="#d2b04a" stroke-width="0.5"/><path d="M0.5 2 Q0.5 0.5 2 0.5 L6.2 0.5 Q7.5 0.5 7.5 2 L7.5 15.5 L1.8 14.8 Q0.5 14.6 0.5 13.5Z" fill="url(#ff5)" stroke="#d6b64e" stroke-width="0.5"/><path d="M3 1.8 L3.6 8" stroke="#fff" stroke-width="1" opacity="0.85"/><rect x="11.6" y="8" width="1.1" height="4.5" fill="#3a9de0"/><rect x="11.6" y="8" width="1.1" height="2" fill="#e8f4fb"/></svg>
<div class="tn" style="left:51px;top:408px">Analysis</div>
<div class="hd" style="left:41px;top:430px;width:10px"></div>
<svg class="a" style="left:54px;top:426px" width="9" height="9" shape-rendering="crispEdges"><path d="M2 1H7V2H8V7H7V8H2V7H1V2H2ZM4 0H5V1H4ZM4 8H5V9H4ZM0 4H1V5H0ZM8 4H9V5H8Z" fill="#5e5e5e"/></svg>
<div class="tn" style="left:70px;top:424px">File Level Analytics</div>
<div class="hd" style="left:27px;top:446px;width:5px"></div>
<div class="eb" style="left:17px;top:442px"></div>
<svg class="a" style="left:32px;top:438px" width="14" height="16" viewBox="0 0 14 16"><defs><linearGradient id="fb6" x1="0" x2="1" y1="0" y2="0"><stop offset="0" stop-color="#e8cf6a"/><stop offset="0.5" stop-color="#f1de8a"/><stop offset="1" stop-color="#d6b54a"/></linearGradient><linearGradient id="ff6" x1="0" x2="1" y1="0" y2="0"><stop offset="0" stop-color="#e4c95c"/><stop offset="0.35" stop-color="#faf0b4"/><stop offset="1" stop-color="#e2c55a"/></linearGradient></defs><path d="M6 0.5 L11.3 0.5 Q12.5 0.5 12.5 1.8 L12.5 6 L13.5 7 L13.5 14.3 L7 15.5Z" fill="url(#fb6)" stroke="#d2b04a" stroke-width="0.5"/><path d="M0.5 2 Q0.5 0.5 2 0.5 L6.2 0.5 Q7.5 0.5 7.5 2 L7.5 15.5 L1.8 14.8 Q0.5 14.6 0.5 13.5Z" fill="url(#ff6)" stroke="#d6b64e" stroke-width="0.5"/><path d="M3 1.8 L3.6 8" stroke="#fff" stroke-width="1" opacity="0.85"/><rect x="11.6" y="8" width="1.1" height="4.5" fill="#3a9de0"/><rect x="11.6" y="8" width="1.1" height="2" fill="#e8f4fb"/></svg>
<div class="tn" style="left:51px;top:440px">Storage</div>
<div class="hd" style="left:41px;top:462px;width:10px"></div>
<svg class="a" style="left:54px;top:458px" width="9" height="9" shape-rendering="crispEdges"><path d="M2 1H7V2H8V7H7V8H2V7H1V2H2ZM4 0H5V1H4ZM4 8H5V9H4ZM0 4H1V5H0ZM8 4H9V5H8Z" fill="#5e5e5e"/></svg>
<div class="tn" style="left:70px;top:456px">Library and Drive</div>
<div class="hd" style="left:41px;top:478px;width:10px"></div>
<svg class="a" style="left:54px;top:474px" width="9" height="9" shape-rendering="crispEdges"><path d="M2 1H7V2H8V7H7V8H2V7H1V2H2ZM4 0H5V1H4ZM4 8H5V9H4ZM0 4H1V5H0ZM8 4H9V5H8Z" fill="#5e5e5e"/></svg>
<div class="tn" style="left:70px;top:472px">Data Retention Forecast and Compliance</div>
<div class="hd" style="left:41px;top:494px;width:10px"></div>
<svg class="a" style="left:54px;top:490px" width="9" height="9" shape-rendering="crispEdges"><path d="M2 1H7V2H8V7H7V8H2V7H1V2H2ZM4 0H5V1H4ZM4 8H5V9H4ZM0 4H1V5H0ZM8 4H9V5H8Z" fill="#5e5e5e"/></svg>
<div class="tn" style="left:70px;top:488px">Scratch Pool</div>
<div class="hd" style="left:41px;top:510px;width:10px"></div>
<svg class="a" style="left:54px;top:506px" width="9" height="9" shape-rendering="crispEdges"><path d="M2 1H7V2H8V7H7V8H2V7H1V2H2ZM4 0H5V1H4ZM4 8H5V9H4ZM0 4H1V5H0ZM8 4H9V5H8Z" fill="#5e5e5e"/></svg>
<div class="tn" style="left:70px;top:504px">Storage Policy</div>
<div class="hd" style="left:41px;top:526px;width:10px"></div>
<svg class="a" style="left:54px;top:522px" width="9" height="9" shape-rendering="crispEdges"><path d="M2 1H7V2H8V7H7V8H2V7H1V2H2ZM4 0H5V1H4ZM4 8H5V9H4ZM0 4H1V5H0ZM8 4H9V5H8Z" fill="#5e5e5e"/></svg>
<div class="tn" style="left:70px;top:520px">Storage Information</div>
<div class="hd" style="left:41px;top:542px;width:10px"></div>
<svg class="a" style="left:54px;top:538px" width="9" height="9" shape-rendering="crispEdges"><path d="M2 1H7V2H8V7H7V8H2V7H1V2H2ZM4 0H5V1H4ZM4 8H5V9H4ZM0 4H1V5H0ZM8 4H9V5H8Z" fill="#5e5e5e"/></svg>
<div class="tn" style="left:70px;top:536px">Media Prediction</div>
<div class="hd" style="left:27px;top:558px;width:5px"></div>
<div class="eb" style="left:17px;top:554px"></div>
<svg class="a" style="left:32px;top:550px" width="14" height="16" viewBox="0 0 14 16"><defs><linearGradient id="fb7" x1="0" x2="1" y1="0" y2="0"><stop offset="0" stop-color="#e8cf6a"/><stop offset="0.5" stop-color="#f1de8a"/><stop offset="1" stop-color="#d6b54a"/></linearGradient><linearGradient id="ff7" x1="0" x2="1" y1="0" y2="0"><stop offset="0" stop-color="#e4c95c"/><stop offset="0.35" stop-color="#faf0b4"/><stop offset="1" stop-color="#e2c55a"/></linearGradient></defs><path d="M6 0.5 L11.3 0.5 Q12.5 0.5 12.5 1.8 L12.5 6 L13.5 7 L13.5 14.3 L7 15.5Z" fill="url(#fb7)" stroke="#d2b04a" stroke-width="0.5"/><path d="M0.5 2 Q0.5 0.5 2 0.5 L6.2 0.5 Q7.5 0.5 7.5 2 L7.5 15.5 L1.8 14.8 Q0.5 14.6 0.5 13.5Z" fill="url(#ff7)" stroke="#d6b64e" stroke-width="0.5"/><path d="M3 1.8 L3.6 8" stroke="#fff" stroke-width="1" opacity="0.85"/><rect x="11.6" y="8" width="1.1" height="4.5" fill="#3a9de0"/><rect x="11.6" y="8" width="1.1" height="2" fill="#e8f4fb"/></svg>
<div class="tn" style="left:51px;top:552px">VaultTracker</div>
<div class="hd" style="left:41px;top:574px;width:10px"></div>
<svg class="a" style="left:54px;top:570px" width="9" height="9" shape-rendering="crispEdges"><path d="M2 1H7V2H8V7H7V8H2V7H1V2H2ZM4 0H5V1H4ZM4 8H5V9H4ZM0 4H1V5H0ZM8 4H9V5H8Z" fill="#5e5e5e"/></svg>
<div class="tn" style="left:70px;top:568px">Tracking</div>
<div class="a" style="left:13px;top:836px;width:257px;height:16px;background:#ececec"></div>
<svg class="a" style="left:17px;top:839px" width="8" height="10"><path d="M2 5 L6 1.5 L6 8.5Z" fill="#222"/></svg>
<svg class="a" style="left:256px;top:839px" width="8" height="10"><path d="M6 5 L2 1.5 L2 8.5Z" fill="#222"/></svg>
<div class="a" style="left:31px;top:836px;width:219px;height:16px;border:1px solid #979797;border-radius:2px;background:linear-gradient(#f6f6f6,#e8e8e8 45%,#d2d2d2 50%,#cdcdcd)"></div>
<div class="a" style="left:136px;top:840px;width:8px;height:8px;background:repeating-linear-gradient(90deg,#3c3c3c 0 1px,#d8d8d8 1px 3px)"></div>
<style>
.tab{position:absolute;top:161px;height:19px;border:1px solid #898c95;border-bottom:none;background:linear-gradient(#f2f2f2,#ebebeb 50%,#dddddd 51%,#cfcfcf);border-radius:2px 2px 0 0;box-shadow:inset 1px 1px 0 #fff,inset -1px 0 0 #fff}
.tab.sel{top:159px;height:22px;background:#fff;z-index:2;border-color:#898c95}
.tl{position:absolute;white-space:nowrap;line-height:13px;letter-spacing:-0.12px}
.rb{position:absolute;width:12px;height:12px;border-radius:50%;border:1px solid #8c8c8c;background:radial-gradient(circle at 50% 50%,#fafafa,#e6e6e6 55%,#c9c9c9 90%);box-shadow:inset 0 0 0 1px #f4f4f4}
.rb.on{background:radial-gradient(circle at 50% 45%,#ffffff,#e6e6e6 60%,#cfcfcf)}.rb.on:after{content:"";box-sizing:border-box;position:absolute;left:1.5px;top:1.5px;width:7px;height:7px;border-radius:50%;border:1.3px solid #0b3358;background:radial-gradient(circle at 40% 35%,#c8f4ff 0,#2aa4ea 45%,#1478c0 100%)}
.rb.dis{border-color:#b4b4b4;background:radial-gradient(circle at 50% 50%,#f8f8f8,#ececec 55%,#d8d8d8 90%)}
.fs{position:absolute;border:1px solid #d5dfe5;border-radius:3px;box-shadow:1px 1px 0 #fff, inset 1px 1px 0 #fff}
.dis{color:#6d6d6d}
.cb{position:absolute;width:13px;height:13px;border:1px solid #8e8f8f;background:#fff}
.cb:after{content:"";box-sizing:border-box;position:absolute;left:1px;top:1px;width:9px;height:9px;border:1px solid #c0c4ca;background:linear-gradient(135deg,#cdd1d6,#eef0f2 60%,#f8f8f8)}
.tf{position:absolute;border:1px solid #abadb3;background:#fff}
.tf.d{background:#f0f0f0;border-color:#b5b5b5}
.spn{position:absolute;width:11px;border:1px solid #9a9a9a;background:linear-gradient(90deg,#f2f2f2,#dcdcdc)}
.btn{position:absolute;top:867px;height:21px;border:1px solid #707070;border-radius:3px;background:linear-gradient(#f2f2f2,#ebebeb 50%,#dddddd 51%,#cfcfcf);text-align:center;line-height:18px;letter-spacing:-0.1px}
</style>
<div class="a" style="left:286px;top:179px;width:730px;height:664px;border:1px solid #898c95;box-shadow:1px 1px 0 #fff;background:#f0f0f0"></div>
<div class="a" style="left:287px;top:180px;width:727px;height:2px;background:#fff"></div>
<div class="tab sel" style="left:286px;width:51px"></div>
<div class="tl" style="left:293px;top:164px;z-index:3">General</div>
<div class="tab" style="left:337px;width:62px"></div>
<div class="tl" style="left:342px;top:165px;z-index:3">Computers</div>
<div class="tab" style="left:398px;width:86px"></div>
<div class="tl dis" style="left:403px;top:165px;z-index:3">Storage Policies</div>
<div class="tab" style="left:484px;width:55px"></div>
<div class="tl" style="left:489px;top:165px;z-index:3">Selection</div>
<div class="tab" style="left:539px;width:48px"></div>
<div class="tl" style="left:544px;top:165px;z-index:3">Options</div>
<div class="tab" style="left:587px;width:67px"></div>
<div class="tl" style="left:592px;top:165px;z-index:3">Time Range</div>
<div class="tab" style="left:654px;width:43px"></div>
<div class="tl" style="left:659px;top:165px;z-index:3">Output</div>
<div class="rb" style="left:312px;top:189px"></div>
<div class="tl" style="left:328px;top:188px">All Jobs</div>
<div class="fs" style="left:301px;top:221px;width:705px;height:64px"></div>
<div class="fs" style="left:301px;top:301px;width:705px;height:91px"></div>
<div class="fs" style="left:301px;top:408px;width:705px;height:226px"></div>
<div class="a" style="left:308px;top:220px;width:114px;height:3px;background:#f0f0f0"></div>
<div class="a" style="left:308px;top:300px;width:123px;height:3px;background:#f0f0f0"></div>
<div class="a" style="left:308px;top:407px;width:118px;height:3px;background:#f0f0f0"></div>
<div class="rb on" style="left:312px;top:217px"></div>
<div class="tl" style="left:328px;top:216px">Data Management</div>
<div class="rb on" style="left:313px;top:240px"></div>
<div class="tl" style="left:329px;top:239px">Backup</div>
<div class="a" style="left:303px;top:233px;width:80px;height:27px;border:2px solid #c0161d"></div>
<div class="rb" style="left:544px;top:240px"></div>
<div class="tl" style="left:560px;top:239px">Archive/Compliance Archive</div>
<div class="rb" style="left:775px;top:240px"></div>
<div class="tl" style="left:791px;top:239px">OSSV Volume Creation</div>
<div class="rb" style="left:313px;top:267px"></div>
<div class="tl" style="left:329px;top:266px">Continuous Data Replicator</div>
<div class="rb" style="left:544px;top:267px"></div>
<div class="tl" style="left:560px;top:266px">SILO Archiver</div>
<div class="rb" style="left:312px;top:297px"></div>
<div class="tl" style="left:328px;top:296px">Data Recovery Jobs</div>
<div class="rb dis" style="left:313px;top:320px"></div>
<div class="tl dis" style="left:329px;top:319px">Browse and Restore</div>
<div class="rb dis" style="left:544px;top:320px"></div>
<div class="tl dis" style="left:560px;top:319px">Recovery/Retrieve</div>
<div class="rb dis" style="left:775px;top:320px"></div>
<div class="tl dis" style="left:791px;top:319px">OSSV Volume Recovery</div>
<div class="rb dis" style="left:313px;top:347px"></div>
<div class="tl dis" style="left:329px;top:346px">CDR Recovery</div>
<div class="rb dis" style="left:544px;top:347px"></div>
<div class="tl dis" style="left:560px;top:346px">Stub Recall</div>
<div class="rb dis" style="left:775px;top:347px"></div>
<div class="tl dis" style="left:791px;top:346px">Search Restore</div>
<div class="rb dis" style="left:313px;top:374px"></div>
<div class="tl dis" style="left:329px;top:373px">SILO Retrieve</div>
<div class="rb" style="left:312px;top:404px"></div>
<div class="tl" style="left:328px;top:403px">Administrative Jobs</div>
<div class="rb dis" style="left:313px;top:427px"></div>
<div class="tl dis" style="left:329px;top:426px">All</div>
<div class="rb dis" style="left:544px;top:427px"></div>
<div class="tl dis" style="left:560px;top:426px">Disaster Recovery Backup</div>
<div class="rb dis" style="left:775px;top:427px"></div>
<div class="tl dis" style="left:791px;top:426px">Auxiliary Copy</div>
<div class="rb dis" style="left:313px;top:454px"></div>
<div class="tl dis" style="left:329px;top:453px">Data Aging</div>
<div class="rb dis" style="left:544px;top:454px"></div>
<div class="tl dis" style="left:560px;top:453px">Data Verification</div>
<div class="rb dis" style="left:775px;top:454px"></div>
<div class="tl dis" style="left:791px;top:453px">Catalog Media Job Summary</div>
<div class="rb dis" style="left:313px;top:481px"></div>
<div class="tl dis" style="left:329px;top:480px">Download Software</div>
<div class="rb dis" style="left:544px;top:481px"></div>
<div class="tl dis" style="left:560px;top:480px">Install/Remove Updates</div>
<div class="rb dis" style="left:775px;top:481px"></div>
<div class="tl dis" style="left:791px;top:480px">Install/Upgrade/Remove/Repair Software</div>
<div class="rb dis" style="left:313px;top:508px"></div>
<div class="tl dis" style="left:329px;top:507px">Offline Content Indexing</div>
<div class="rb dis" style="left:544px;top:508px"></div>
<div class="tl dis" style="left:560px;top:507px">Backup Copy Work Flow</div>
<div class="rb dis" style="left:775px;top:508px"></div>
<div class="tl dis" style="left:791px;top:507px">Disk Library Maintenance</div>
<div class="rb dis" style="left:313px;top:535px"></div>
<div class="tl dis" style="left:329px;top:534px">Information Management</div>
<div class="rb dis" style="left:544px;top:535px"></div>
<div class="tl dis" style="left:560px;top:534px">Erase Backup/Archived Data</div>
<div class="rb dis" style="left:775px;top:535px"></div>
<div class="tl dis" style="left:791px;top:534px">Media Refreshing</div>
<div class="rb dis" style="left:313px;top:562px"></div>
<div class="tl dis" style="left:329px;top:561px">Commcell Export</div>
<div class="rb dis" style="left:544px;top:562px"></div>
<div class="tl dis" style="left:560px;top:561px">Commcell Import</div>
<div class="rb dis" style="left:775px;top:562px"></div>
<div class="tl dis" style="left:791px;top:561px">Reconstruct Dedupe Database</div>
<div class="rb dis" style="left:313px;top:589px"></div>
<div class="tl dis" style="left:329px;top:588px">VM Management</div>
<div class="rb dis" style="left:544px;top:589px"></div>
<div class="tl dis" style="left:560px;top:588px">Virtualize Me</div>
<div class="rb dis" style="left:775px;top:589px"></div>
<div class="tl dis" style="left:791px;top:588px">Send Log Files</div>
<div class="rb dis" style="left:313px;top:616px"></div>
<div class="tl dis" style="left:329px;top:615px">Reports</div>
<div class="rb dis" style="left:544px;top:616px"></div>
<div class="tl dis" style="left:560px;top:615px">EDC Discovery</div>
<div class="tl" style="left:307px;top:640px">View Type:</div>
<div class="rb" style="left:380px;top:642px"></div>
<div class="rb on" style="left:464px;top:642px"></div>
<div class="tl" style="left:397px;top:640px">Calendar</div><div class="tl" style="left:481px;top:640px">Detailed</div>
<div class="tl" style="left:307px;top:670px">Group By :</div>
<div class="tf" style="left:382px;top:665px;width:150px;height:22px"></div>
<div class="a" style="left:511px;top:666px;width:20px;height:20px;background:#f0f0f0;box-shadow:inset 1px 1px 0 #fff,inset -2px -2px 0 #6e6e6e"></div>
<svg class="a" style="left:514px;top:672px" width="12" height="8"><path d="M1 1 L10 1 L5.5 5.5Z" fill="#666"/></svg>
<div class="tl" style="left:384px;top:670px">Client</div>
<div class="cb" style="left:307px;top:704px"></div>
<div class="tl" style="left:324px;top:704px">Job ID</div>
<div class="tf" style="left:375px;top:696px;width:103px;height:20px"></div>
<div class="tl" style="left:467px;top:700px">1</div>
<div class="spn" style="left:477px;top:696px;height:10px"></div>
<div class="spn" style="left:477px;top:706px;height:10px"></div>
<svg class="a" style="left:477px;top:696px" width="11" height="20"><path d="M3.5 6 L5.5 3.5 L7.5 6Z M3.5 14 L5.5 16.5 L7.5 14Z" fill="#444"/></svg>
<div class="cb" style="left:307px;top:737px"></div>
<div class="tl" style="left:324px;top:737px">Job(s) with Error Code</div>
<div class="tf d" style="left:456px;top:733px;width:103px;height:20px"></div>
<div class="tl" style="left:548px;top:737px">1</div>
<div class="spn" style="left:558px;top:733px;height:10px"></div>
<div class="spn" style="left:558px;top:743px;height:10px"></div>
<svg class="a" style="left:558px;top:733px" width="11" height="20"><path d="M3.5 6 L5.5 3.5 L7.5 6Z M3.5 14 L5.5 16.5 L7.5 14Z" fill="#444"/></svg>
<div class="tl" style="left:574px;top:737px;font-weight:bold">:</div>
<div class="tf d" style="left:583px;top:733px;width:103px;height:20px"></div>
<div class="tl" style="left:675px;top:737px">1</div>
<div class="spn" style="left:685px;top:733px;height:10px"></div>
<div class="spn" style="left:685px;top:743px;height:10px"></div>
<svg class="a" style="left:685px;top:733px" width="11" height="20"><path d="M3.5 6 L5.5 3.5 L7.5 6Z M3.5 14 L5.5 16.5 L7.5 14Z" fill="#444"/></svg>
<div class="cb" style="left:307px;top:770px"></div>
<div class="tl" style="left:324px;top:770px">Job(s) with Description</div>
<div class="tf d" style="left:453px;top:767px;width:551px;height:19px"></div>
<div class="cb" style="left:307px;top:803px"></div>
<div class="tl" style="left:324px;top:803px">Filter on Subclient description</div>
<div class="tf d" style="left:483px;top:800px;width:521px;height:19px"></div>
<div class="btn" style="left:679px;width:49px">Run</div>
<div class="btn" style="left:735px;width:73px">Schedule</div>
<div class="btn" style="left:815px;width:81px">Save As...</div>
<div class="btn" style="left:903px;width:57px">Close</div>
<div class="btn" style="left:967px;width:51px">Help</div>
<svg class="a" style="left:304.0px;top:7.0px;z-index:20" width="22" height="36" viewBox="-2 -2 22 36"><defs><linearGradient id="cu0" x1="0" y1="0" x2="1" y2="1"><stop offset="0" stop-color="#d8d4a0"/><stop offset="0.45" stop-color="#fbfbe8"/><stop offset="1" stop-color="#c4be86"/></linearGradient></defs><path d="M0 0 L0 25 L5.8 19.8 L9.8 30 L13.6 28.5 L9.8 19 L16.6 19 Z" fill="url(#cu0)" stroke="#0c0c5c" stroke-width="1.3" stroke-linejoin="round"/></svg>
<svg class="a" style="left:26.5px;top:60.0px;z-index:20" width="22" height="36" viewBox="-2 -2 22 36"><defs><linearGradient id="cu1" x1="0" y1="0" x2="1" y2="1"><stop offset="0" stop-color="#d8d4a0"/><stop offset="0.45" stop-color="#fbfbe8"/><stop offset="1" stop-color="#c4be86"/></linearGradient></defs><path d="M0 0 L0 25 L5.8 19.8 L9.8 30 L13.6 28.5 L9.8 19 L16.6 19 Z" fill="url(#cu1)" stroke="#0c0c5c" stroke-width="1.3" stroke-linejoin="round"/></svg>
<svg class="a" style="left:304.2px;top:167.0px;z-index:20" width="22" height="36" viewBox="-2 -2 22 36"><defs><linearGradient id="cu2" x1="0" y1="0" x2="1" y2="1"><stop offset="0" stop-color="#d8d4a0"/><stop offset="0.45" stop-color="#fbfbe8"/><stop offset="1" stop-color="#c4be86"/></linearGradient></defs><path d="M0 0 L0 25 L5.8 19.8 L9.8 30 L13.6 28.5 L9.8 19 L16.6 19 Z" fill="url(#cu2)" stroke="#0c0c5c" stroke-width="1.3" stroke-linejoin="round"/></svg>
</body></html>
